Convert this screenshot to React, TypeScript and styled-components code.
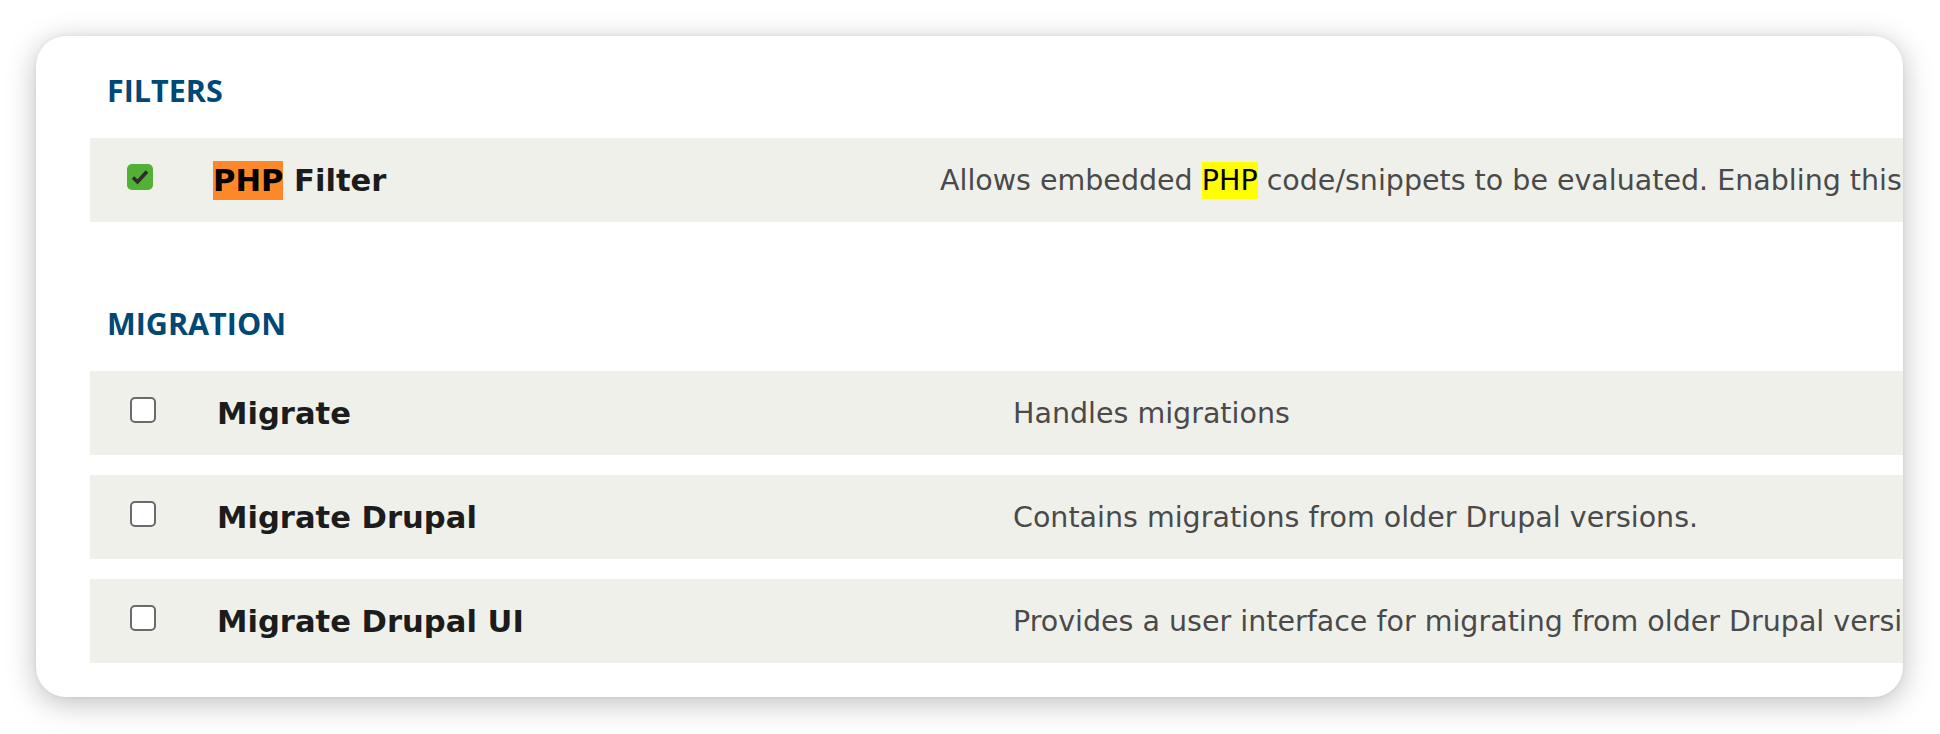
import React from 'react';
import styled, { createGlobalStyle } from 'styled-components';

const GlobalStyle = createGlobalStyle`
  html, body {
    margin: 0;
    padding: 0;
    background: #ffffff;
  }

  body {
    font-family: 'DejaVu Sans', 'Liberation Sans', sans-serif;
  }
`;

const Page = styled.div`
  padding: 36px 37px 37px 36px;
  height: 734px;
  box-sizing: border-box;
`;

const Card = styled.div`
  background: #ffffff;
  border-radius: 30px;
  box-shadow: 0 6px 30px rgba(0, 0, 0, 0.26), 0 0 4px rgba(0, 0, 0, 0.06);
  overflow: hidden;
  height: 661px;
  box-sizing: border-box;
  padding: 39px 0 0 54px;
`;

const Group = styled.section`
  & + & {
    margin-top: 86px;
  }
`;

const GroupTitle = styled.h2`
  margin: 0 0 32px 17px;
  font-family: 'Open Sans', 'Noto Sans', sans-serif;
  font-weight: 700;
  font-size: 30.5px;
  line-height: 31px;
  color: #004875;
  text-transform: uppercase;
`;

const Rows = styled.div`
  display: flex;
  flex-direction: column;
  gap: 20px;
`;

const Row = styled.div<{ $check: number; $name: number }>`
  display: grid;
  grid-template-columns: ${(p) => p.$check}px ${(p) => p.$name}px auto;
  align-items: center;
  height: 84px;
  background: #f0f0eb;
`;

const CheckCell = styled.div<{ $inset: number }>`
  display: flex;
  padding-left: ${(p) => p.$inset}px;
  margin-bottom: 7px;
`;

const Box = styled.span<{ $checked: boolean }>`
  display: inline-flex;
  width: 26px;
  height: 26px;
  box-sizing: border-box;
  border-radius: 5px;
  background: ${(p) => (p.$checked ? '#52b037' : '#ffffff')};
  border: ${(p) => (p.$checked ? 'none' : '2px solid #6a6a6a')};
`;

const Name = styled.span`
  font-weight: 700;
  font-size: 30.6px;
  color: #1c1c1c;
  white-space: nowrap;
`;

const Desc = styled.span`
  font-size: 28.5px;
  color: #4a4a4a;
  white-space: nowrap;
`;

const Mark = styled.mark<{ $bg: string }>`
  background: ${(p) => p.$bg};
  color: #000000;
  padding: 2px 0;
`;

const Checkbox = ({ checked }: { checked: boolean }) => (
  <Box $checked={checked}>
    {checked && (
      <svg width="26" height="26" viewBox="0 0 26 26">
        <polyline
          points="6,13.5 10.5,18 20,7.5"
          fill="none"
          stroke="#2c2c2c"
          strokeWidth="3.6"
          strokeLinejoin="miter"
        />
      </svg>
    )}
  </Box>
);

interface Module {
  checked: boolean;
  name: React.ReactNode;
  desc: React.ReactNode;
}

const groups: {
  title: string;
  check: number;
  inset: number;
  name: number;
  modules: Module[];
}[] = [
  {
    title: 'Filters',
    check: 123,
    inset: 37,
    name: 727,
    modules: [
      {
        checked: true,
        name: (
          <>
            <Mark $bg="#fd8829">PHP</Mark> Filter
          </>
        ),
        desc: (
          <>
            Allows embedded <Mark $bg="#ffff00">PHP</Mark> code/snippets to be
            evaluated. Enabling this with administer permissions
          </>
        ),
      },
    ],
  },
  {
    title: 'Migration',
    check: 127,
    inset: 40,
    name: 796,
    modules: [
      { checked: false, name: 'Migrate', desc: 'Handles migrations' },
      {
        checked: false,
        name: 'Migrate Drupal',
        desc: 'Contains migrations from older Drupal versions.',
      },
      {
        checked: false,
        name: 'Migrate Drupal UI',
        desc: 'Provides a user interface for migrating from older Drupal versions.',
      },
    ],
  },
];

export default function App() {
  return (
    <>
      <GlobalStyle />
      <Page>
        <Card>
          {groups.map((g) => (
            <Group key={g.title}>
              <GroupTitle>{g.title}</GroupTitle>
              <Rows>
                {g.modules.map((m, i) => (
                  <Row key={i} $check={g.check} $name={g.name}>
                    <CheckCell $inset={g.inset}>
                      <Checkbox checked={m.checked} />
                    </CheckCell>
                    <Name>{m.name}</Name>
                    <Desc>{m.desc}</Desc>
                  </Row>
                ))}
              </Rows>
            </Group>
          ))}
        </Card>
      </Page>
    </>
  );
}
